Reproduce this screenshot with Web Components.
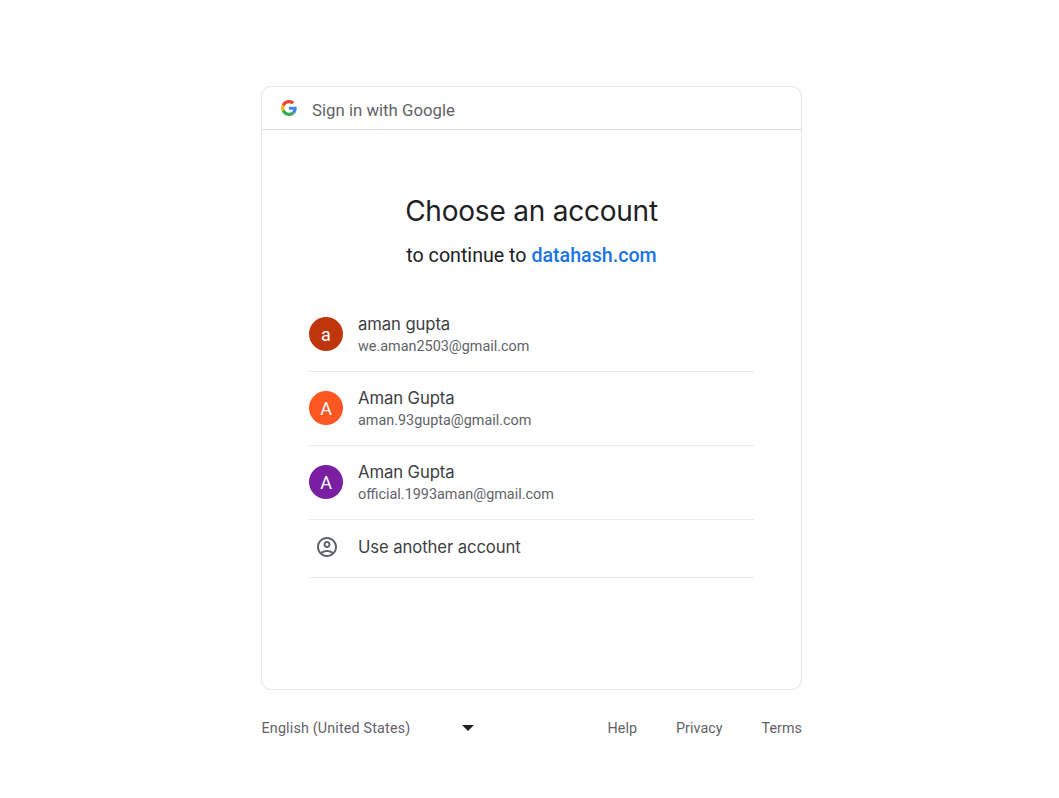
<!DOCTYPE html>
<html><head><meta charset="utf-8"><title>Sign in with Google</title>
<style>html,body{margin:0;padding:0;background:#fff;height:100%}body{font-family:Roboto,"Liberation Sans",sans-serif}</style></head>
<body>
<signin-page>
  <signin-card>
    <account-row slot="rows" name="aman gupta" email="we.aman2503@gmail.com" initial="a" color="#bf360c"></account-row>
    <account-row slot="rows" name="Aman Gupta" email="aman.93gupta@gmail.com" initial="A" color="#ff5722"></account-row>
    <account-row slot="rows" name="Aman Gupta" email="official.1993aman@gmail.com" initial="A" color="#7b1fa2"></account-row>
    <another-row slot="rows"></another-row>
  </signin-card>
  <signin-footer></signin-footer>
</signin-page>
<script>
function def(name, html){
  customElements.define(name, class extends HTMLElement{
    connectedCallback(){
      if(this.shadowRoot) return;
      const r=this.attachShadow({mode:'open'});
      let h=html;
      for(const a of this.getAttributeNames()) h=h.split('{{'+a+'}}').join(this.getAttribute(a));
      r.innerHTML=h;
    }
  });
}
def('signin-page',`<style>:host{display:flex;flex-direction:column;align-items:center;padding:86px 0 0 4px;width:100%;box-sizing:border-box}</style><slot></slot>`);
def('signin-card',`<style>
:host{display:block;width:541px;height:604px;box-sizing:border-box;border:1px solid #e3e5e8;border-radius:10px;overflow:hidden}
.head{height:42px;border-bottom:1px solid #dadce0;display:flex;align-items:center;padding-left:19px;gap:15px}
.head span{font:16.8px Roboto,sans-serif;color:#5f6368;position:relative;top:2px}
h1{margin:0;padding-top:64px;text-align:center;font:400 28px/34px Inter,Roboto,sans-serif;color:#202124;letter-spacing:-.22px}
p{margin:0;padding-top:16px;text-align:center;font:400 19.65px/24px Roboto,sans-serif;color:#202124}
p b{font-weight:500;color:#1a73e8}
.rows{margin:30px 47px 0 47px}
</style>
<div class="head"><svg width="16" height="16" viewBox="0 0 48 48"><path fill="#EA4335" d="M24 9.5c3.54 0 6.71 1.22 9.21 3.6l6.85-6.85C35.9 2.38 30.47 0 24 0 14.62 0 6.51 5.38 2.56 13.22l7.98 6.19C12.43 13.72 17.74 9.5 24 9.5z"/><path fill="#4285F4" d="M46.98 24.55c0-1.57-.15-3.09-.38-4.55H24v9.02h12.94c-.58 2.96-2.26 5.48-4.78 7.18l7.73 6c4.51-4.18 7.09-10.36 7.09-17.65z"/><path fill="#FBBC05" d="M10.53 28.59c-.48-1.45-.76-2.99-.76-4.59s.27-3.14.76-4.59l-7.98-6.19C.92 16.46 0 20.12 0 24c0 3.88.92 7.54 2.56 10.78l7.97-6.19z"/><path fill="#34A853" d="M24 48c6.48 0 11.93-2.13 15.89-5.81l-7.73-6c-2.15 1.45-4.92 2.3-8.16 2.3-6.26 0-11.57-4.22-13.47-9.91l-7.98 6.19C6.51 42.62 14.62 48 24 48z"/></svg><span>Sign in with Google</span></div>
<h1>Choose an account</h1>
<p>to continue to <b>datahash.com</b></p>
<div class="rows"><slot name="rows"></slot></div>`);
def('account-row',`<style>
:host{display:flex;align-items:center;height:72px;padding-bottom:1px;border-bottom:1px solid #e8eaed}
.av{width:34px;height:34px;border-radius:50%;background:{{color}};color:#fff;display:flex;align-items:center;justify-content:center;font:400 18px Roboto,sans-serif;margin-right:15px;flex:none}
.t{margin-top:2px}
.n{font:400 16.7px/20px Inter,Roboto,sans-serif;color:#3c4043;letter-spacing:-.1px}
.e{font:400 14.4px/18px Roboto,sans-serif;color:#5f6368;margin-top:4px}
</style><div class="av">{{initial}}</div><div class="t"><div class="n">{{name}}</div><div class="e">{{email}}</div></div>`);
def('another-row',`<style>
:host{display:flex;align-items:center;height:53px;padding-bottom:4px;border-bottom:1px solid #e8eaed}
svg{margin:0 19.5px 0 5.5px;flex:none}
span{font:400 16.7px Inter,Roboto,sans-serif;color:#3c4043;letter-spacing:-.1px}
</style><svg width="24" height="24" viewBox="0 0 24 24" fill="#5f6368"><path d="M12 2C6.48 2 2 6.48 2 12s4.48 10 10 10 10-4.48 10-10S17.52 2 12 2zM7.35 18.5C8.66 17.56 10.26 17 12 17s3.34.56 4.65 1.5c-1.31.94-2.91 1.5-4.65 1.5s-3.34-.56-4.65-1.5zm10.79-1.38C16.45 15.8 14.32 15 12 15s-4.45.8-6.14 2.12C4.7 15.73 4 13.95 4 12c0-4.42 3.58-8 8-8s8 3.58 8 8c0 1.95-.7 3.73-1.86 5.12z"/><path d="M12 6c-1.93 0-3.5 1.57-3.5 3.5S10.07 13 12 13s3.5-1.57 3.5-3.5S13.93 6 12 6zm0 5c-.83 0-1.5-.67-1.5-1.5S11.17 8 12 8s1.5.67 1.5 1.5S12.83 11 12 11z"/></svg><span>Use another account</span>`);
def('signin-footer',`<style>
:host{display:flex;width:541px;margin-top:27px;align-items:center;font:14.3px/22px Roboto,sans-serif;color:#3c4043}
.lang{width:213px;display:flex;justify-content:space-between;align-items:center}
.lang span{letter-spacing:.18px;color:#5f6368;padding-left:.5px}
.lang i{width:0;height:0;border:6px solid transparent;border-top:6px solid #202124;border-bottom:0;display:block}
.links{margin-left:auto;display:flex;gap:39px;color:#5f6368;letter-spacing:.05px}
</style><div class="lang"><span>English (United States)</span><i></i></div><div class="links"><span>Help</span><span>Privacy</span><span>Terms</span></div>`);
</script>
</body></html>
